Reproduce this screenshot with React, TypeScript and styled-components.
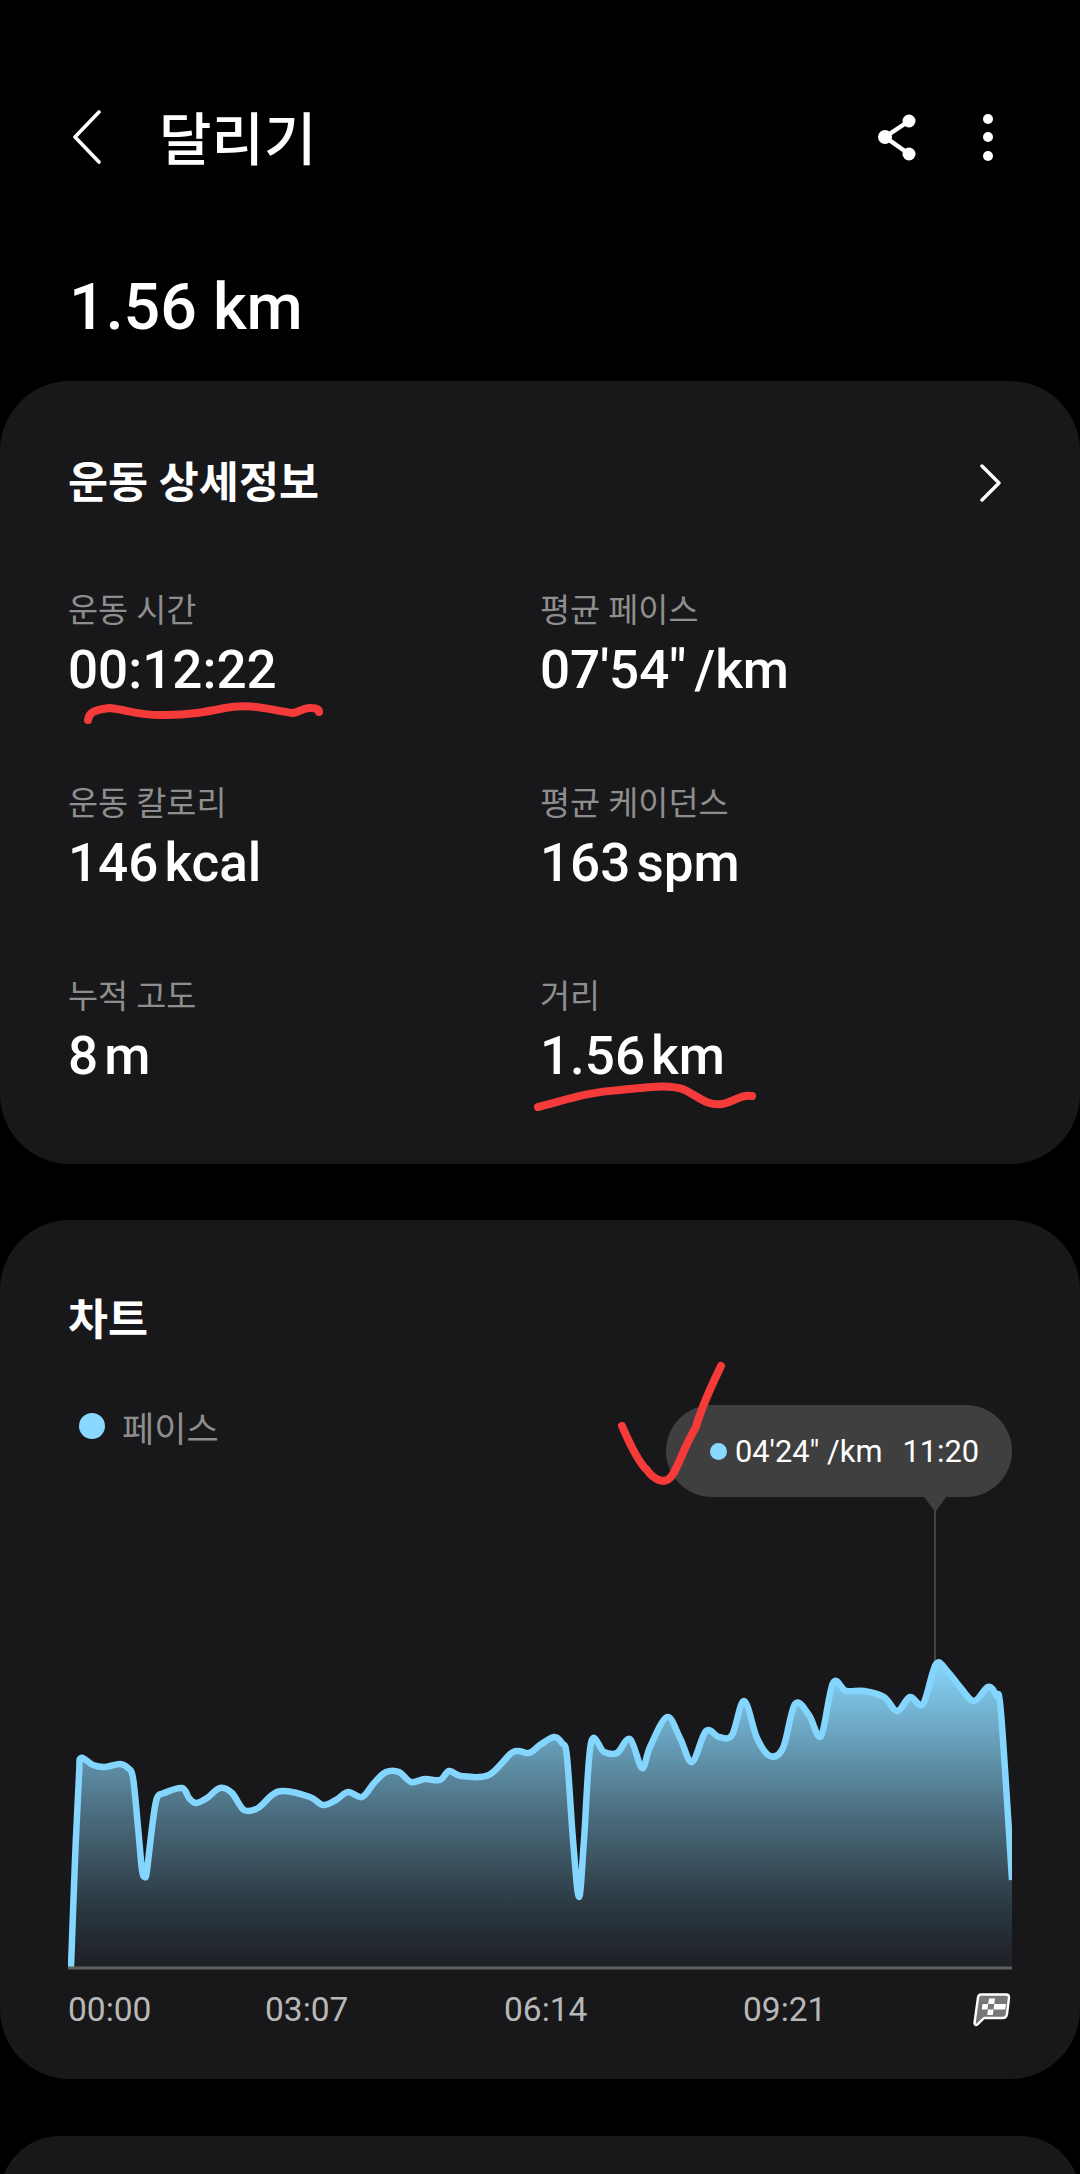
import { createGlobalStyle, styled } from "styled-components"

const FONT = `Roboto, "Noto Sans CJK KR", sans-serif`

const PACE_POINTS: [number, number][] = [
    [71, 1967], [75, 1860], [79, 1775], [81, 1758], [93, 1765], [105, 1767], [120, 1764], [128, 1768], [133, 1778], [138, 1827], [142, 1870],
    [145, 1877], [147, 1870], [153, 1820], [157, 1798], [164, 1793], [182, 1788], [189, 1798], [196, 1803], [207, 1798],
    [220, 1788], [232, 1793], [244, 1810], [258, 1808], [272, 1795], [284, 1791], [310, 1797], [323, 1805], [336, 1800],
    [348, 1792], [362, 1797], [374, 1783], [386, 1772], [399, 1772], [411, 1782], [425, 1779], [440, 1780], [449, 1771],
    [461, 1776], [489, 1775], [513, 1752], [529, 1753], [540, 1745], [554, 1737], [562, 1743], [567, 1757], [573, 1840],
    [579, 1897], [584, 1840], [591, 1743], [604, 1752], [617, 1753], [630, 1739], [642, 1768], [650, 1747], [667, 1717],
    [680, 1738], [692, 1762], [706, 1731], [719, 1737], [732, 1735], [744, 1701], [757, 1738], [770, 1756], [783, 1748],
    [795, 1704], [809, 1715], [821, 1736], [833, 1683], [846, 1691], [864, 1691], [884, 1697], [897, 1711], [910, 1697],
    [923, 1704], [936, 1664], [948, 1672], [960, 1687], [974, 1701], [988, 1687], [996, 1695], [1001, 1713], [1012, 1880],
]

// catmull-rom through the samples so the line stays round
function smoothPath(pts: [number, number][]) {
    let d = `M${pts[0][0]} ${pts[0][1]}`
    for (let i = 0; i < pts.length - 1; i++) {
        const p0 = pts[Math.max(i - 1, 0)]
        const p1 = pts[i]
        const p2 = pts[i + 1]
        const p3 = pts[Math.min(i + 2, pts.length - 1)]
        const c1x = p1[0] + (p2[0] - p0[0]) / 6
        const c1y = p1[1] + (p2[1] - p0[1]) / 6
        const c2x = p2[0] - (p3[0] - p1[0]) / 6
        const c2y = p2[1] - (p3[1] - p1[1]) / 6
        d += `C${c1x.toFixed(1)} ${c1y.toFixed(1)} ${c2x.toFixed(1)} ${c2y.toFixed(1)} ${p2[0]} ${p2[1]}`
    }
    return d
}

const PACE_LINE = smoothPath(PACE_POINTS)
const PACE_AREA = `${PACE_LINE}L1012 1968L71 1968Z`

const STATS = [
    { label: "운동 시간", value: "00:12:22" },
    { label: "평균 페이스", value: `07'54" /km` },
    { label: "운동 칼로리", value: "146", unit: "kcal" },
    { label: "평균 케이던스", value: "163", unit: "spm" },
    { label: "누적 고도", value: "8", unit: "m" },
    { label: "거리", value: "1.56", unit: "km" },
]

export default function App() {
    return <>
    <GlobalStyle/>
    <Page>
        <Header>
            <HeaderLeft>
                <svg width="30" height="54" viewBox="0 0 30 54" fill="none" stroke="#fff" strokeWidth="3.6" strokeLinecap="round" strokeLinejoin="round">
                    <path d="M27 2L3 27L27 52"/>
                </svg>
                <PageTitle>달리기</PageTitle>
            </HeaderLeft>
            <HeaderIcons>
                <svg width="44" height="48" viewBox="0 0 44 48" fill="#fff" stroke="#fff">
                    <path d="M33 8L9 24L33 41" fill="none" strokeWidth="4.5"/>
                    <circle cx="33" cy="8" r="6.500" stroke="none"/>
                    <circle cx="9" cy="24" r="7" stroke="none"/>
                    <circle cx="33" cy="41" r="6.500" stroke="none"/>
                </svg>
                <svg width="12" height="48" viewBox="0 0 12 48" fill="#fff">
                    <circle cx="6" cy="6" r="5"/>
                    <circle cx="6" cy="24" r="5"/>
                    <circle cx="6" cy="43" r="5"/>
                </svg>
            </HeaderIcons>
        </Header>
        <Distance>1.56 km</Distance>
        <DetailCard>
            <CardHead>
                <CardTitle>운동 상세정보</CardTitle>
                <svg width="24" height="40" viewBox="0 0 24 40" fill="none" stroke="#fff" strokeWidth="3.4" strokeLinecap="round" strokeLinejoin="round">
                    <path d="M4 2L21 19L4 36"/>
                </svg>
            </CardHead>
            <StatGrid>
                {STATS.map((s)=><div key={s.label}>
                    <StatLabel>{s.label}</StatLabel>
                    <StatValue>{s.value}{s.unit && <Unit>{s.unit}</Unit>}</StatValue>
                </div>)}
            </StatGrid>
        </DetailCard>
        <ChartCard>
            <CardTitle>차트</CardTitle>
            <Legend>
                <LegendDot/>
                <LegendText>페이스</LegendText>
            </Legend>
            <ChartArea>
                <Tooltip>
                    <TooltipDot/>
                    <span>04'24" /km</span>
                    <TooltipTime>11:20</TooltipTime>
                </Tooltip>
                <svg width="944" height="473" viewBox="68 1497 944 473" style={{display:"block"}}>
                    <defs>
                        <linearGradient id="paceFill" gradientUnits="userSpaceOnUse" x1="0" y1="1664" x2="0" y2="1968">
                            <stop offset="0" stopColor="#86d4f8"/>
                            <stop offset="0.5" stopColor="#4a6b7d"/>
                            <stop offset="0.8" stopColor="#2b3841"/>
                            <stop offset="1" stopColor="#1d1f24"/>
                        </linearGradient>
                    </defs>
                    <path d="M924 1497L946 1497L935.500 1512Z" fill="#3f3f3f"/>
                    <rect x="934" y="1510" width="2" height="154" fill="#444"/>
                    <path d={PACE_AREA} fill="url(#paceFill)"/>
                    <path d={PACE_LINE} fill="none" stroke="#85d6ff" strokeWidth="6.5" strokeLinejoin="round"/>
                    <rect x="68" y="1966.5" width="944" height="3" fill="#5e5e5e"/>
                </svg>
            </ChartArea>
            <TimeAxis>
                <span>00:00</span>
                <span>03:07</span>
                <span>06:14</span>
                <span>09:21</span>
                <svg width="38" height="34" viewBox="0 0 38 34">
                    <path d="M8 1.5H33Q36.5 1.5 36 5L34 21Q33.500 25 29.500 25H11L4.500 31.500Q2 33 1.500 30L5 4.500Q5.500 1.500 8 1.500Z" fill="#777" stroke="#fff" strokeWidth="2.4" strokeLinejoin="round"/>
                    <path d="M16 5.500H22L21.200 11H15.200ZM9.500 11H15.200L14.500 16.500H8.800ZM21.200 11H27L26.300 16.500H20.500ZM15 16.500H20.500L19.800 22H14.200ZM27 11H33L32.300 16.500H26.300Z" fill="#fff"/>
                </svg>
            </TimeAxis>
        </ChartCard>
        <NextCard/>
        <PenMarks viewBox="0 0 1080 2174" fill="none" stroke="#f53a3a" strokeLinecap="round" strokeLinejoin="round">
            <path strokeWidth="8" d="M88 720C89 712 94 710 110 708C128 710 140 716 165 715C190 715 205 712 225 708C250 703 270 710 293 713C300 712 304 707 311 708C317 708 319 710 319 712"/>
            <path strokeWidth="8" d="M538 1107C560 1102 585 1092 620 1090C650 1087 670 1084 685 1090C700 1098 708 1106 722 1104C735 1102 740 1094 752 1096"/>
            <path strokeWidth="8" d="M622 1426C628 1440 638 1462 647 1470C654 1480 664 1484 670 1478C678 1470 682 1450 696 1427C702 1405 712 1385 721 1366"/>
        </PenMarks>
    </Page>
    </>
}

const GlobalStyle = createGlobalStyle`
html, body {
    margin: 0;
    background: #000;
}
* {
    box-sizing: border-box;
}
`
const Page = styled.div`
position: relative;
width: 1080px;
height: 2174px;
overflow: hidden;
padding-top: 110px;
background: #000;
color: #fff;
font-family: ${FONT};
`
const PenMarks = styled.svg`
position: absolute;
top: 0;
left: 0;
width: 1080px;
height: 2174px;
pointer-events: none;
`
const Header = styled.header`
display: flex;
align-items: center;
justify-content: space-between;
height: 54px;
padding: 0 86px 0 72px;
`
const HeaderLeft = styled.div`
display: flex;
align-items: center;
gap: 57px;
`
const HeaderIcons = styled.div`
display: flex;
align-items: center;
gap: 62px;
`
const PageTitle = styled.h1`
margin: 0;
padding-top: 8px;
font-size: 57px;
font-weight: 500;
line-height: 54px;
`
const Distance = styled.div`
height: 75px;
margin-top: 106px;
padding-left: 69px;
font-size: 64.5px;
font-weight: 500;
line-height: 75px;
`
const Card = styled.section`
background: #18181a;
border-radius: 70px;
`
const DetailCard = styled(Card)`
height: 783px;
margin-top: 36px;
padding: 81px 68px 0;
`
const CardHead = styled.div`
display: flex;
align-items: center;
justify-content: space-between;
height: 44px;
padding-right: 10px;
`
const CardTitle = styled.h2`
margin: 0;
font-size: 43.5px;
font-weight: 700;
line-height: 44px;
`
const StatGrid = styled.div`
display: grid;
grid-template-columns: 472px 1fr;
grid-auto-rows: 193px;
margin-top: 85px;
`
const StatLabel = styled.div`
font-size: 32.7px;
line-height: 40px;
color: #8e8e8e;
`
const StatValue = styled.div`
margin-top: 8px;
font-size: 53px;
font-weight: 500;
line-height: 62px;
word-spacing: -5px;
`
const Unit = styled.span`
margin-left: 6px;
`
const ChartCard = styled(Card)`
height: 859px;
margin-top: 56px;
padding: 79px 68px 0;
`
const Legend = styled.div`
display: flex;
align-items: center;
gap: 17px;
height: 44px;
margin-top: 61px;
padding-left: 11px;
`
const LegendDot = styled.span`
width: 26px;
height: 26px;
border-radius: 50%;
background: #8ad8ff;
`
const LegendText = styled.span`
font-size: 35px;
color: #8e8e8e;
`
const ChartArea = styled.div`
position: relative;
margin-top: 49px;
`
const Tooltip = styled.div`
position: absolute;
top: -92px;
right: 0;
display: flex;
align-items: center;
width: 346px;
height: 92px;
padding-left: 44px;
border-radius: 46px;
background: #3f3f3f;
font-size: 30.8px;
white-space: nowrap;
`
const TooltipDot = styled.span`
width: 17px;
height: 17px;
margin-right: 8px;
border-radius: 50%;
background: #8ad8ff;
`
const TooltipTime = styled.span`
margin-left: 20px;
`
const TimeAxis = styled.div`
display: grid;
grid-template-columns: 197px 239px 239px 1fr auto;
align-items: center;
height: 36px;
margin-top: 20px;
font-size: 33.5px;
color: #b8b8b8;
svg {
    margin-right: 1px;
}
`
const NextCard = styled(Card)`
height: 120px;
margin-top: 57px;
`
